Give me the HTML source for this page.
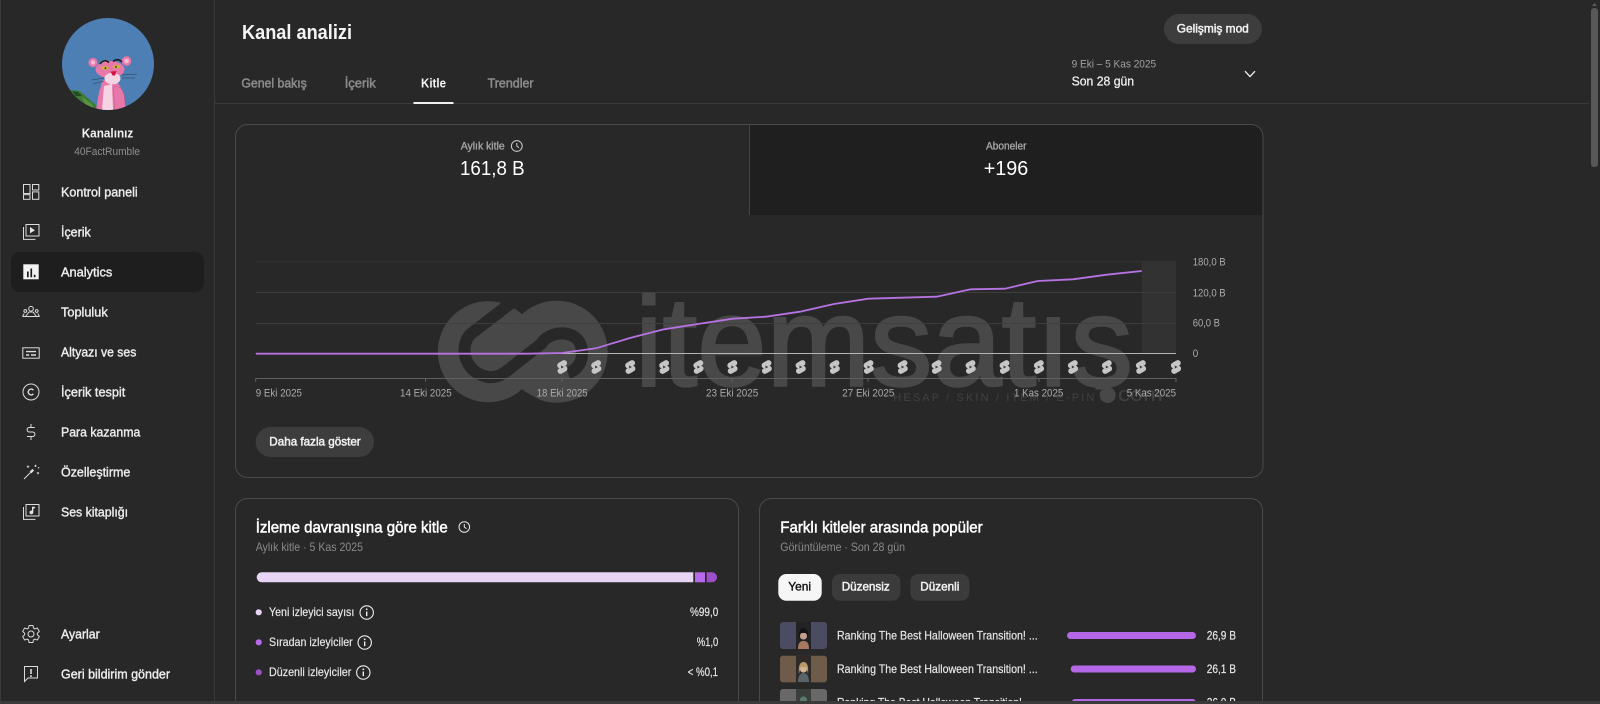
<!DOCTYPE html>
<html lang="tr">
<head>
<meta charset="utf-8">
<title>Kanal analizi</title>
<style>
html,body{margin:0;padding:0;background:#282828;width:1600px;height:704px;overflow:hidden}
svg{display:block}
text{font-family:"Liberation Sans","Noto Sans CJK JP",sans-serif;white-space:pre}
.nav{font-size:13px;fill:#ececec;stroke:#ececec;stroke-width:.4}
.tab{font-size:13px;fill:#8c8c8c;stroke:#8c8c8c;stroke-width:.5}
.ax{font-size:11px;fill:#aaa}
.lab{font-size:11px;fill:#a5a5a5;stroke:#a5a5a5;stroke-width:.35}
.big{font-size:20px;fill:#fff}
.h2{font-size:16px;fill:#fff;stroke:#fff;stroke-width:.5}
.sub{font-size:12px;fill:#8a8a8a}
.lg{font-size:12px;fill:#e6e6e6;stroke:#e6e6e6;stroke-width:.2}
.btn{font-size:12px;fill:#f1f1f1;stroke:#f1f1f1;stroke-width:.5}
.ic{fill:none;stroke:#dcdcdc;stroke-width:1}
</style>
</head>
<body>
<svg xmlns="http://www.w3.org/2000/svg" width="1600" height="704" viewBox="0 0 1600 704">
<defs>
<clipPath id="av"><circle cx="108" cy="64" r="46"/></clipPath>
<g id="sh">
<g transform="rotate(-30)">
<rect x="-4" y="-5.4" width="10.5" height="5.8" rx="2.9" fill="#c6c6c6"/>
<rect x="-6.5" y="-.4" width="10.5" height="5.8" rx="2.9" fill="#c6c6c6"/>
</g>
<path d="M-1.2 -1.5L1.6 0L-1.2 1.5Z" fill="#3a3a3a"/>
</g>
<g id="info">
<circle r="6.7" fill="none" stroke="#ededed" stroke-width="1.1"/>
<path d="M0 -1V3.6" stroke="#ededed" stroke-width="1.4" fill="none"/>
<circle cy="-3.2" r=".9" fill="#ededed"/>
</g>
</defs>

<rect width="1600" height="704" fill="#282828"/>

<!-- structural lines -->
<rect x="214" y="0" width="1" height="704" fill="#3a3a3a"/>
<rect x="215" y="103" width="1374" height="1" fill="#3a3a3a"/>

<!-- avatar -->
<g clip-path="url(#av)">
<rect x="62" y="18" width="92" height="92" fill="#4d7fb4"/>
<path d="M70 90L80 91L98 107L98 112L70 112Z" fill="#3f7a32"/>
<path d="M72 91L78 92L82 96L76 96Z" fill="#1f4a22"/>
<path d="M82 97L92 104L94 110L86 107Z" fill="#58953f"/>
<path d="M96 110L99 92L103 80H116L121 88L126 110Z" fill="#e878aa"/>
<path d="M102 110L104 86L112 84L113 110Z" fill="#f4d3e3"/>
<path d="M113 88C117 84 122 88 124 94L126 110H115Z" fill="#e878aa" stroke="#b34f82" stroke-width=".4"/>
<circle cx="93" cy="62.5" r="4.6" fill="#e878aa"/><circle cx="93" cy="62.5" r="2.2" fill="#f5bcd5"/>
<circle cx="126.5" cy="61" r="4.8" fill="#e878aa"/><circle cx="126.5" cy="61" r="2.4" fill="#f5bcd5"/>
<ellipse cx="110" cy="69.5" rx="14.5" ry="8.5" fill="#e878aa"/>
<ellipse cx="112.5" cy="78.5" rx="8" ry="5.8" fill="#f4d3e3"/>
<ellipse cx="105" cy="68" rx="3.8" ry="1.7" fill="#cfb92c"/>
<ellipse cx="116.5" cy="66.8" rx="3.8" ry="1.7" fill="#cfb92c"/>
<circle cx="105.5" cy="68.2" r=".9" fill="#222"/><circle cx="116" cy="67" r=".9" fill="#222"/>
<path d="M100 64C103 60 106 60 109 62.5M113 61.5C116 59 119 59 122 62" stroke="#1c1c1c" stroke-width="1.5" fill="none"/>
<path d="M110.5 71.5L116.5 71L115 75.5L112.5 75.5Z" fill="#d3123f"/>
<path d="M104 78L92 80M104 81L93 84M122 75L137 74M122 78L135 78" stroke="#2d3a4a" stroke-width=".5" fill="none"/>
</g>

<!-- profile text -->
<text x="81.7" y="137.7" font-size="13" font-weight="700" fill="#f1f1f1" textLength="51.6" lengthAdjust="spacingAndGlyphs">Kanalınız</text>
<text x="74.3" y="155.2" font-size="11" fill="#8f8f8f" textLength="65.7" lengthAdjust="spacingAndGlyphs">40FactRumble</text>

<!-- nav highlight -->
<rect x="11" y="252" width="193" height="40" rx="9" fill="#1e1e1e"/>

<!-- nav labels -->
<text class="nav" x="61" y="196.3" textLength="76.7" lengthAdjust="spacingAndGlyphs">Kontrol paneli</text>
<text class="nav" x="61" y="236.3" textLength="29.7" lengthAdjust="spacingAndGlyphs">İçerik</text>
<text class="nav" x="61" y="276.3" textLength="51.3" lengthAdjust="spacingAndGlyphs">Analytics</text>
<text class="nav" x="61" y="316.3" textLength="46.7" lengthAdjust="spacingAndGlyphs">Topluluk</text>
<text class="nav" x="61" y="356.3" textLength="75.3" lengthAdjust="spacingAndGlyphs">Altyazı ve ses</text>
<text class="nav" x="61" y="396.3" textLength="64.3" lengthAdjust="spacingAndGlyphs">İçerik tespit</text>
<text class="nav" x="61" y="436.3" textLength="79.3" lengthAdjust="spacingAndGlyphs">Para kazanma</text>
<text class="nav" x="61" y="476.3" textLength="69.3" lengthAdjust="spacingAndGlyphs">Özelleştirme</text>
<text class="nav" x="61" y="516.3" textLength="67" lengthAdjust="spacingAndGlyphs">Ses kitaplığı</text>
<text class="nav" x="61" y="638.3" textLength="38.7" lengthAdjust="spacingAndGlyphs">Ayarlar</text>
<text class="nav" x="61" y="678.3" textLength="109" lengthAdjust="spacingAndGlyphs">Geri bildirim gönder</text>

<!-- nav icons -->
<g transform="translate(19,180)" class="ic">
<rect x="4.5" y="4.5" width="6.5" height="9"/><rect x="13.5" y="4.5" width="6.3" height="5.5"/>
<rect x="4.5" y="14.7" width="6.5" height="4.6"/><rect x="13.5" y="11.9" width="6.3" height="7.4"/>
</g>
<g transform="translate(19,220)" class="ic">
<rect x="7" y="4.5" width="13" height="11.5"/><path d="M4.5 7V19.4H16.5"/>
<path d="M11 7L16 10.2L11 13.4Z" fill="#e4e4e4" stroke="none"/>
</g>
<g transform="translate(19,260)">
<rect x="4.3" y="4.3" width="15.4" height="15" fill="#f4f4f4"/>
<path d="M8 11.5h1.7v5.8H8ZM11.4 8.5h1.7v8.8h-1.7ZM14.8 14.8h1.7v2.5h-1.7Z" fill="#1e1e1e"/>
</g>
<g transform="translate(19,300)" class="ic">
<circle cx="12" cy="8.7" r="2.3"/><circle cx="6.3" cy="11" r="1.4"/><circle cx="17.7" cy="11" r="1.4"/>
<path d="M6.5 16.5L10 12L14 12L17.5 16.5"/>
<path d="M3.5 16.5L5.2 13.5M20.5 16.5L18.8 13.5M3.5 16.5H20.5"/>
</g>
<g transform="translate(19,340)" class="ic">
<rect x="3.8" y="7.8" width="16.4" height="10.4"/>
<path d="M7 11.6H17M7 15H10.2M12 15H17" stroke-width="1.4"/>
</g>
<g transform="translate(19,380)" class="ic">
<circle cx="12" cy="12" r="8"/><path d="M14.4 10.2a2.9 2.9 0 1 0 0 3.6" stroke-width="1.4"/>
</g>
<g transform="translate(19,420)" class="ic">
<path d="M15.8 7.5H10.3a2.2 2.2 0 0 0-2.2 2.2v.1a2.2 2.2 0 0 0 2.2 2.2h3.4a2.2 2.2 0 0 1 2.2 2.2v.1a2.2 2.2 0 0 1-2.2 2.2H8M12 4V7.5M12 16.6V20"/>
</g>
<g transform="translate(19,460)" class="ic">
<path d="M5 19L11.5 12.5"/><path d="M11.5 12.5L14.3 9.7" stroke-width="2.4"/>
<path d="M9 5.5v2.4M7.8 6.7h2.4M16.5 4.8v2.2M15.4 5.9h2.2M19 12v2.2M17.9 13.1h2.2" stroke-width=".9"/>
<circle cx="19.6" cy="7.8" r=".7" fill="#e4e4e4" stroke="none"/>
</g>
<g transform="translate(19,500)" class="ic">
<rect x="7" y="4.5" width="13" height="11.5"/><path d="M4.5 7V19.4H16.5"/>
<path d="M13 6.8H15.8V8.5H14.3V12.4A1.9 1.9 0 1 1 13 10.6Z" fill="#e4e4e4" stroke="none"/>
</g>
<g transform="translate(19,622)" class="ic">
<g transform="translate(1.8,1.8) scale(.85)"><path stroke-width="1.15" d="M19.43 12.98c.04-.32.07-.64.07-.98s-.03-.66-.07-.98l2.11-1.65c.19-.15.24-.42.12-.64l-2-3.46c-.12-.22-.39-.3-.61-.22l-2.49 1c-.52-.4-1.08-.73-1.69-.98l-.38-2.65C14.46 2.18 14.25 2 14 2h-4c-.25 0-.46.18-.49.42l-.38 2.65c-.61.25-1.17.59-1.69.98l-2.49-1c-.23-.09-.49 0-.61.22l-2 3.46c-.13.22-.07.49.12.64l2.11 1.65c-.04.32-.07.65-.07.98s.03.66.07.98l-2.11 1.65c-.19.15-.24.42-.12.64l2 3.46c.12.22.39.3.61.22l2.49-1c.52.4 1.08.73 1.69.98l.38 2.65c.03.24.24.42.49.42h4c.25 0 .46-.18.49-.42l.38-2.65c.61-.25 1.17-.59 1.69-.98l2.49 1c.23.09.49 0 .61-.22l2-3.46c.12-.22.07-.49-.12-.64l-2.11-1.65z"/></g>
<circle cx="12" cy="12" r="3"/>
</g>
<g transform="translate(19,662)" class="ic">
<path d="M5.5 4.5H18.5V16H9L5.5 19.5Z"/>
<path d="M12 7V12M12 13.3V15" stroke-width="1.6"/>
</g>

<!-- header -->
<text x="242" y="39" font-size="20" font-weight="700" fill="#f4f4f4" textLength="110" lengthAdjust="spacingAndGlyphs">Kanal analizi</text>
<text class="tab" x="241.4" y="87.7" textLength="65.4" lengthAdjust="spacingAndGlyphs">Genel bakış</text>
<text class="tab" x="344.7" y="87.7" textLength="31" lengthAdjust="spacingAndGlyphs">İçerik</text>
<text x="421" y="87.7" font-size="13" font-weight="700" fill="#f4f4f4" textLength="25" lengthAdjust="spacingAndGlyphs">Kitle</text>
<text class="tab" x="487.6" y="87.7" textLength="46" lengthAdjust="spacingAndGlyphs">Trendler</text>
<rect x="413.5" y="102" width="40" height="2" fill="#f1f1f1"/>

<rect x="1164" y="14" width="98" height="30" rx="15" fill="#3d3d3d"/>
<text class="btn" x="1176.8" y="32.4" textLength="72" lengthAdjust="spacingAndGlyphs">Gelişmiş mod</text>
<text x="1071.6" y="67.6" font-size="11" fill="#a0a0a0" textLength="84.5" lengthAdjust="spacingAndGlyphs">9 Eki – 5 Kas 2025</text>
<text x="1071.6" y="85.5" font-size="13" fill="#f1f1f1" stroke="#f1f1f1" stroke-width=".25" textLength="62.5" lengthAdjust="spacingAndGlyphs">Son 28 gün</text>
<path d="M1245 71.2L1250 76.6L1255 71.2" fill="none" stroke="#f1f1f1" stroke-width="1.3"/>

<!-- scrollbar -->
<rect x="1591" y="8" width="7" height="159" rx="3" fill="#585858"/>
<path d="M1594.5 3L1597 6H1592Z" fill="#5a5a5a"/>

<!-- main card -->
<path d="M749 124.5H1251A12 12 0 0 1 1263 136.5V215H749Z" fill="#1f1f1f"/>
<rect x="235.5" y="124.5" width="1027.5" height="353" rx="12" fill="none" stroke="#4a4a4a"/>
<rect x="749" y="124" width="1" height="91" fill="#454545"/>

<text class="lab" x="460.7" y="149.7" textLength="44" lengthAdjust="spacingAndGlyphs">Aylık kitle</text>
<g transform="translate(516.8,146)" fill="none" stroke="#cfcfcf" stroke-width="1"><circle r="5.4"/><path d="M0 -3V0L2.2 1.8"/></g>
<text class="big" x="460" y="175.2" textLength="64.6" lengthAdjust="spacingAndGlyphs">161,8 B</text>
<text class="lab" x="986" y="149.7" textLength="40.5" lengthAdjust="spacingAndGlyphs">Aboneler</text>
<text class="big" x="983.7" y="175.2" textLength="44.5" lengthAdjust="spacingAndGlyphs">+196</text>

<!-- watermark -->
<g>
<circle cx="488.3" cy="351.7" r="50.5" fill="#484848"/>
<circle cx="556.7" cy="351.7" r="51" fill="#484848"/>
<path d="M511 303L472 333C459 343 462 372 488 377C497 378 503 374 508 370L541 344C550 329 582 328 582 353C582 366 574 371 568 373" fill="none" stroke="#282828" stroke-width="12"/>
<path d="M522 395L540 405" fill="none" stroke="#282828" stroke-width="9"/>
<text x="635" y="385.7" font-size="127" fill="#484848" stroke="#484848" stroke-width="2.5" textLength="498" lengthAdjust="spacingAndGlyphs">itemsatış</text>
<rect x="1085" y="389.5" width="55" height="25" fill="#282828"/>
<text x="893.3" y="401" font-size="11" fill="#414141" letter-spacing="2" textLength="203">HESAP / SKIN / ITEM / E-PIN</text>
<circle cx="1107.7" cy="395" r="8" fill="#484848"/>
<text x="1118" y="401" font-size="20" fill="#414141" textLength="45" lengthAdjust="spacingAndGlyphs">com</text>
</g>

<!-- chart -->
<rect x="1141.7" y="262" width="34.3" height="91" fill="#ffffff" opacity=".05"/>
<path d="M255.7 261.7H1176" stroke="#343434"/>
<path d="M255.7 292.5H1176M255.7 323.5H1176" stroke="#404040" opacity=".9"/>
<path d="M255.7 353.5H1176" stroke="#b5b5b5"/>
<path d="M255.7 378.5H1176" stroke="#5f5f5f"/>
<path d="M255.7 378V382M425.5 378V382M562 378V382M732 378V382M868 378V382M1039 378V382M1176 378V382" stroke="#5f5f5f"/>
<polyline fill="none" stroke="#b673e2" stroke-width="1.8" points="256,353.7 528,353.7 562,353 596,348.3 630,338 664,329.3 698,324 732.7,318.7 766,316.7 800,311.7 834,304 868.3,298.7 902,297.7 936.7,296.7 970.7,289.3 1005,288.7 1037.7,281 1073,279.3 1106.7,274.7 1141.7,271"/>

<use href="#sh" x="562.3" y="367"/><use href="#sh" x="596.3" y="367"/><use href="#sh" x="630.3" y="367"/>
<use href="#sh" x="664.3" y="367"/><use href="#sh" x="698.5" y="367"/><use href="#sh" x="732.5" y="367"/>
<use href="#sh" x="766.7" y="367"/><use href="#sh" x="800.7" y="367"/><use href="#sh" x="834.7" y="367"/>
<use href="#sh" x="868.7" y="367"/><use href="#sh" x="902.7" y="367"/><use href="#sh" x="936.7" y="367"/>
<use href="#sh" x="970.7" y="367"/><use href="#sh" x="1004.7" y="367"/><use href="#sh" x="1039" y="367"/>
<use href="#sh" x="1073" y="367"/><use href="#sh" x="1107" y="367"/><use href="#sh" x="1141" y="367"/>
<use href="#sh" x="1176" y="367"/>

<text class="ax" x="255.7" y="396.7" textLength="46.3" lengthAdjust="spacingAndGlyphs">9 Eki 2025</text>
<text class="ax" x="400" y="396.7" textLength="51.7" lengthAdjust="spacingAndGlyphs">14 Eki 2025</text>
<text class="ax" x="536.7" y="396.7" textLength="51" lengthAdjust="spacingAndGlyphs">18 Eki 2025</text>
<text class="ax" x="706" y="396.7" textLength="52.3" lengthAdjust="spacingAndGlyphs">23 Eki 2025</text>
<text class="ax" x="842.3" y="396.7" textLength="52" lengthAdjust="spacingAndGlyphs">27 Eki 2025</text>
<text class="ax" x="1014" y="396.7" textLength="49.3" lengthAdjust="spacingAndGlyphs">1 Kas 2025</text>
<text class="ax" x="1126.7" y="396.7" textLength="49.3" lengthAdjust="spacingAndGlyphs">5 Kas 2025</text>
<text class="ax" x="1192.7" y="265.7" textLength="33" lengthAdjust="spacingAndGlyphs">180,0 B</text>
<text class="ax" x="1192.7" y="296.4" textLength="33" lengthAdjust="spacingAndGlyphs">120,0 B</text>
<text class="ax" x="1192.7" y="326.5" textLength="27.3" lengthAdjust="spacingAndGlyphs">60,0 B</text>
<text class="ax" x="1192.7" y="357" textLength="5.5" lengthAdjust="spacingAndGlyphs">0</text>

<rect x="255.7" y="427" width="118.3" height="30" rx="15" fill="#3d3d3d"/>
<text class="btn" x="269.3" y="445.5" textLength="91.4" lengthAdjust="spacingAndGlyphs">Daha fazla göster</text>

<!-- left lower card -->
<rect x="235.5" y="498.5" width="503" height="240" rx="12" fill="none" stroke="#4a4a4a"/>
<text class="h2" x="255.7" y="532.7" textLength="192" lengthAdjust="spacingAndGlyphs">İzleme davranışına göre kitle</text>
<g transform="translate(464.3,527)" fill="none" stroke="#e6e6e6" stroke-width="1"><circle r="5.3"/><path d="M0 -3V0L2.2 1.8"/></g>
<text class="sub" x="255.7" y="551" textLength="107.3" lengthAdjust="spacingAndGlyphs">Aylık kitle · 5 Kas 2025</text>

<path d="M261.7 572.3H693.3V582.3H261.7A5 5 0 0 1 261.7 572.3Z" fill="#e8d5f5"/>
<rect x="695" y="572.3" width="10" height="10" fill="#b868ea"/>
<path d="M706.7 572.3H712A5 5 0 0 1 712 582.3H706.7Z" fill="#9c4fc9"/>

<circle cx="258.7" cy="612.3" r="3.1" fill="#e8d5f5"/>
<text class="lg" x="269" y="616" textLength="85.3" lengthAdjust="spacingAndGlyphs">Yeni izleyici sayısı</text>
<use href="#info" x="366.7" y="612.5"/>
<text class="lg" x="690" y="616" textLength="28.3" lengthAdjust="spacingAndGlyphs">%99,0</text>
<circle cx="258.7" cy="642.3" r="3.1" fill="#b868ea"/>
<text class="lg" x="269" y="646" textLength="83.7" lengthAdjust="spacingAndGlyphs">Sıradan izleyiciler</text>
<use href="#info" x="364.7" y="642.5"/>
<text class="lg" x="696.7" y="646" textLength="21.6" lengthAdjust="spacingAndGlyphs">%1,0</text>
<circle cx="258.7" cy="672.3" r="3.1" fill="#9c4fc9"/>
<text class="lg" x="269" y="676" textLength="82.3" lengthAdjust="spacingAndGlyphs">Düzenli izleyiciler</text>
<use href="#info" x="363.3" y="672.5"/>
<text class="lg" x="687.7" y="676" textLength="30.3" lengthAdjust="spacingAndGlyphs">&lt; %0,1</text>

<!-- right lower card -->
<rect x="759.5" y="498.5" width="503" height="240" rx="12" fill="none" stroke="#4a4a4a"/>
<text class="h2" x="780.3" y="532.7" textLength="202.4" lengthAdjust="spacingAndGlyphs">Farklı kitleler arasında popüler</text>
<text class="sub" x="780.3" y="551" textLength="124.7" lengthAdjust="spacingAndGlyphs">Görüntüleme · Son 28 gün</text>

<rect x="778.3" y="574" width="43.4" height="26.7" rx="8" fill="#f6f6f6"/>
<text x="788.3" y="590.6" font-size="12" fill="#111" stroke="#111" stroke-width=".4" textLength="22.7" lengthAdjust="spacingAndGlyphs">Yeni</text>
<rect x="832" y="574" width="68.3" height="26.7" rx="8" fill="#3b3b3b"/>
<text class="btn" x="841.7" y="590.6" textLength="48" lengthAdjust="spacingAndGlyphs">Düzensiz</text>
<rect x="910.3" y="574" width="59" height="26.7" rx="8" fill="#3b3b3b"/>
<text class="btn" x="920.3" y="590.6" textLength="39" lengthAdjust="spacingAndGlyphs">Düzenli</text>

<!-- rows -->
<rect x="780" y="622" width="47" height="27" rx="3" fill="#4b4b62"/>
<rect x="796" y="622" width="15" height="27" fill="#232326"/>
<path d="M798 649C798 642 801 641 803.5 641S809 642 809 649Z" fill="#a87a62"/>
<circle cx="803.5" cy="636" r="3.6" fill="#c4a08c"/>
<path d="M799 640C798 630 801 628 803.5 628S809 630 808 640L806.5 633H800.5Z" fill="#15131a"/>
<text class="lg" x="837" y="639.5" textLength="200.7" lengthAdjust="spacingAndGlyphs">Ranking The Best Halloween Transition! ...</text>
<rect x="1067" y="632" width="129" height="7" rx="3.5" fill="#b468e8"/>
<text class="lg" x="1206.7" y="639.5" textLength="29.3" lengthAdjust="spacingAndGlyphs">26,9 B</text>

<rect x="780" y="655.7" width="47" height="26.7" rx="3" fill="#6f5b49"/>
<rect x="796" y="655.7" width="15" height="26.7" fill="#2d2a28"/>
<path d="M798 682C798 675 801 673 803.5 673S809 675 809 682Z" fill="#5a6468"/>
<circle cx="803.5" cy="669" r="3.6" fill="#d4b592"/>
<path d="M799 674C798 664 801 662 803.5 662S809 664 808 674L806.5 667H800.5Z" fill="#b89a6a"/>
<text class="lg" x="837" y="672.9" textLength="200.7" lengthAdjust="spacingAndGlyphs">Ranking The Best Halloween Transition! ...</text>
<rect x="1070.7" y="665.5" width="125.3" height="7" rx="3.5" fill="#b468e8"/>
<text class="lg" x="1206.7" y="672.9" textLength="29.3" lengthAdjust="spacingAndGlyphs">26,1 B</text>

<rect x="780" y="689" width="47" height="27" rx="3" fill="#686868"/>
<rect x="796" y="689" width="15" height="27" fill="#3a3f3c"/>
<circle cx="803.5" cy="700" r="3.6" fill="#5c7a6c"/>
<text class="lg" x="837" y="706.5" textLength="196.5" lengthAdjust="spacingAndGlyphs">Ranking The Best Halloween Transition! ...</text>
<rect x="1071.7" y="699" width="124.3" height="7" rx="3.5" fill="#b468e8"/>
<text class="lg" x="1206.7" y="706.5" textLength="29.3" lengthAdjust="spacingAndGlyphs">26,0 B</text>

<!-- window frame -->
<rect x="0" y="701" width="1600" height="3" fill="#3a3a3a"/>
<rect x="0" y="0" width="1" height="704" fill="#3a3a3a"/>
</svg>
</body>
</html>
